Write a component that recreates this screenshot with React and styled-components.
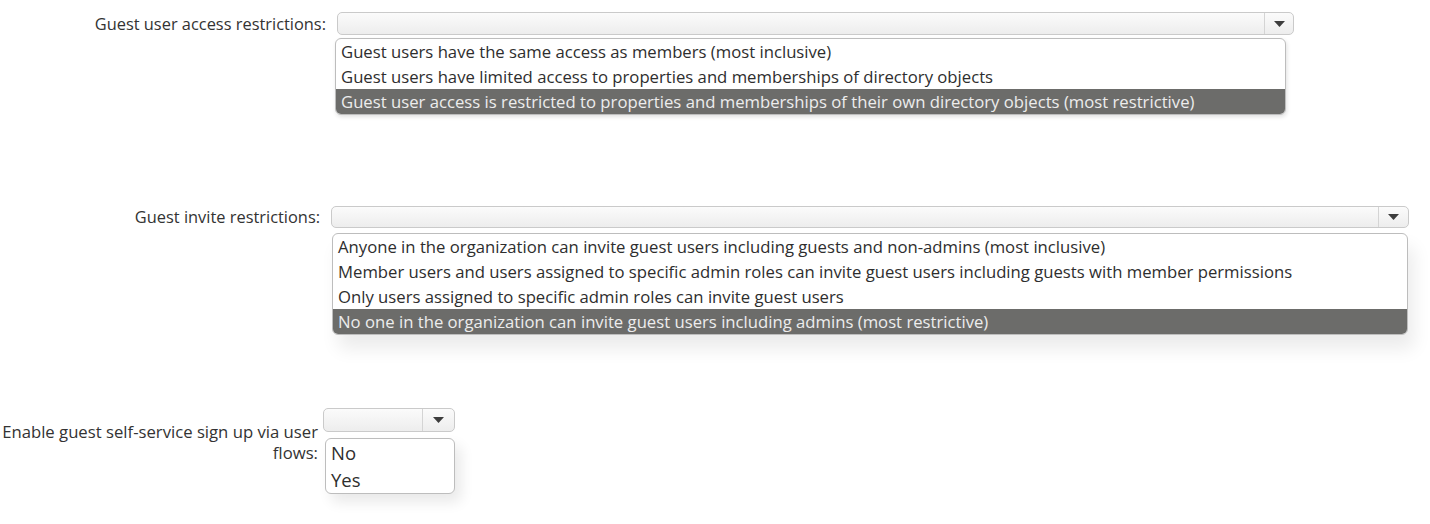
import React from "react";
import styled, { createGlobalStyle } from "styled-components";

const GlobalStyle = createGlobalStyle`
  body {
    margin: 0;
    background: #ffffff;
    font-family: "Open Sans", "Noto Sans", sans-serif;
    color: #333333;
  }
`;

const Page = styled.div`
  width: 1430px;
  height: 524px;
  padding-top: 12px;
  box-sizing: border-box;
  overflow: hidden;
  display: flex;
  flex-direction: column;
`;

const Field = styled.div`
  display: flex;
  align-items: flex-start;
  gap: ${(p) => p.$gap}px;
  margin-top: ${(p) => p.$top}px;
`;

const Label = styled.div`
  width: ${(p) => p.$width}px;
  flex-shrink: 0;
  text-align: right;
  font-size: ${(p) => p.$size}px;
  line-height: ${(p) => p.$line}px;
  padding-top: ${(p) => p.$pad || 0}px;
  color: #333333;
  white-space: nowrap;
`;

const Control = styled.div`
  width: ${(p) => p.$width}px;
  display: flex;
  flex-direction: column;
`;

const Select = styled.div`
  height: ${(p) => p.$height}px;
  display: flex;
  border: 1px solid #cacaca;
  border-radius: 5px;
  background: linear-gradient(#fbfbfb, #ededed);
  box-sizing: border-box;
`;

const SelectValue = styled.div`
  flex: 1;
`;

const ArrowButton = styled.div`
  width: ${(p) => p.$width}px;
  border-left: 1px solid #d4d4d4;
  display: flex;
  align-items: center;
  justify-content: center;
`;

const List = styled.ul`
  list-style: none;
  margin: ${(p) => p.$gapTop}px 0 0 ${(p) => p.$shift}px;
  padding: 0;
  width: ${(p) => p.$width}px;
  background: #ffffff;
  border: 1px solid #bdbdbd;
  border-radius: 6px;
  overflow: hidden;
  box-sizing: border-box;
  box-shadow: ${(p) => p.$shadow};
`;

const Option = styled.li`
  height: ${(p) => p.$height}px;
  line-height: ${(p) => p.$height}px;
  padding-left: 5px;
  font-size: ${(p) => p.$size}px;
  white-space: nowrap;
  background: ${(p) => (p.$selected ? "#6c6c6a" : "transparent")};
  color: ${(p) => (p.$selected ? "#ededed" : "#2e2e2e")};
`;

const Arrow = () => (
  <svg width="11" height="6" viewBox="0 0 11 6">
    <path d="M0 0h11L5.5 6z" fill="#3d3d3d" />
  </svg>
);

const Dropdown = ({ width, height, arrow, list }) => (
  <Control $width={width}>
    <Select $height={height}>
      <SelectValue />
      <ArrowButton $width={arrow}>
        <Arrow />
      </ArrowButton>
    </Select>
    <List
      $gapTop={list.gapTop}
      $shift={list.shift}
      $width={list.width}
      $shadow={list.shadow}
    >
      {list.options.map((o, i) => (
        <Option
          key={o}
          $height={list.row}
          $size={list.size}
          $selected={i === list.selected}
        >
          {o}
        </Option>
      ))}
    </List>
  </Control>
);

const accessOptions = [
  "Guest users have the same access as members (most inclusive)",
  "Guest users have limited access to properties and memberships of directory objects",
  "Guest user access is restricted to properties and memberships of their own directory objects (most restrictive)",
];

const inviteOptions = [
  "Anyone in the organization can invite guest users including guests and non-admins (most inclusive)",
  "Member users and users assigned to specific admin roles can invite guest users including guests with member permissions",
  "Only users assigned to specific admin roles can invite guest users",
  "No one in the organization can invite guest users including admins (most restrictive)",
];

const App = () => {
  return (
    <Page>
      <GlobalStyle />
      <Field $gap={11} $top={0}>
        <Label $width={326} $line={23} $size={16.4}>
          Guest user access restrictions:
        </Label>
        <Dropdown
          width={957}
          height={23}
          arrow={28}
          list={{
            gapTop: 3,
            shift: -2,
            width: 951,
            row: 25,
            size: 16.7,
            selected: 2,
            shadow: "1px 2px 4px rgba(0,0,0,0.12)",
            options: accessOptions,
          }}
        />
      </Field>

      <Field $gap={11} $top={91}>
        <Label $width={320} $line={22} $size={16.4}>
          Guest invite restrictions:
        </Label>
        <Dropdown
          width={1078}
          height={22}
          arrow={29}
          list={{
            gapTop: 5,
            shift: 1,
            width: 1076,
            row: 25,
            size: 16.7,
            selected: 3,
            shadow: "6px 14px 18px rgba(0,0,0,0.08)",
            options: inviteOptions,
          }}
        />
      </Field>

      <Field $gap={5} $top={73}>
        <Label $width={318} $line={21} $pad={13} $size={16.7}>
          Enable guest self-service sign up via user
          <br />
          flows:
        </Label>
        <Dropdown
          width={132}
          height={24}
          arrow={31}
          list={{
            gapTop: 6,
            shift: 2,
            width: 130,
            row: 27,
            size: 18.5,
            selected: -1,
            shadow: "6px 8px 14px rgba(0,0,0,0.09)",
            options: ["No", "Yes"],
          }}
        />
      </Field>
    </Page>
  );
};

export default App;
